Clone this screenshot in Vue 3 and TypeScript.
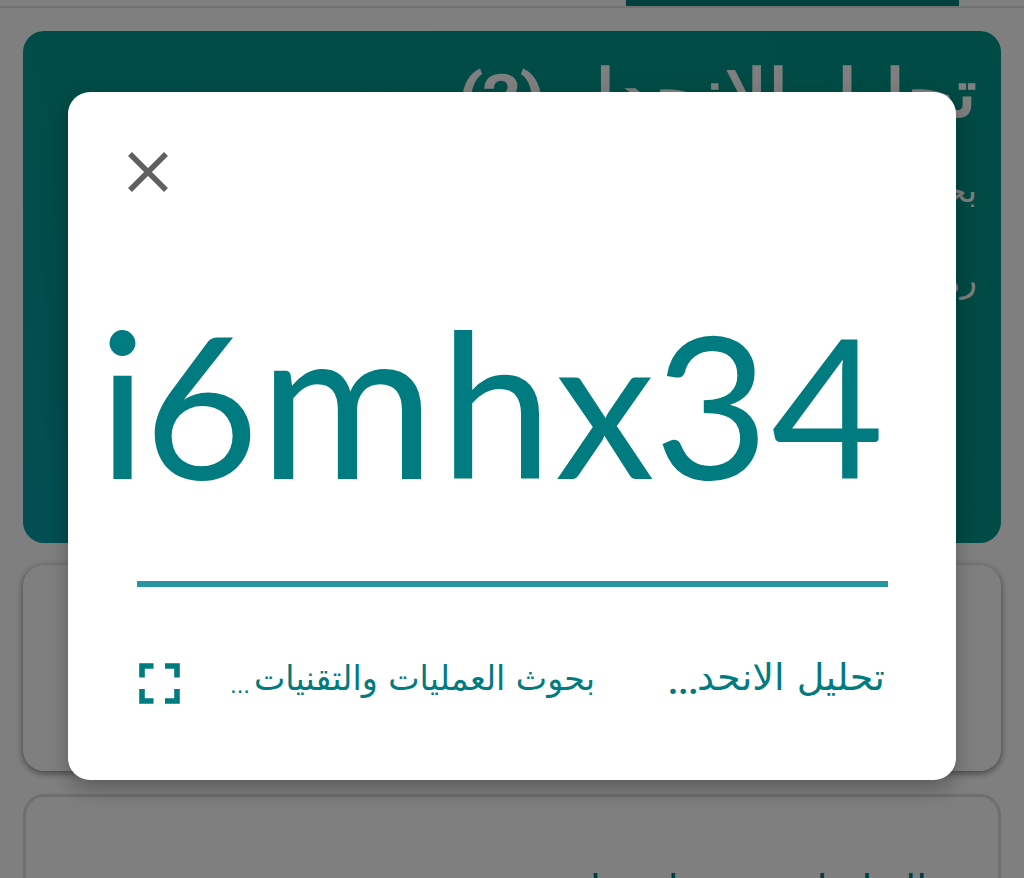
<script setup lang="ts">
import { ref } from 'vue'

const isOpen = ref(true)

const course = {
  title: 'تحليل الانحدار',
  group: '(2)',
  section: 'بحوث العمليات والتقنيات',
  codeLabel: 'رمز الصف',
}

const codeGlyphs = [
  { char: 'i', x: -10, size: 204 },
  { char: '6', x: 36, size: 198 },
  { char: 'm', x: 151, size: 214 },
  { char: 'h', x: 332, size: 201 },
  { char: 'x', x: 447, size: 200 },
  { char: '3', x: 546, size: 198 },
  { char: '4', x: 663, size: 195 },
]

const close = () => {
  isOpen.value = false
}
</script>
<template>
  <div class="page" dir="rtl">
    <nav class="tabs"><span class="tab-indicator"></span></nav>
    <main class="stream">
      <section class="banner">
        <h1 class="banner-title">{{ course.title }} <span class="group">{{ course.group }}</span></h1>
        <p class="banner-section">{{ course.section }}</p>
        <p class="banner-code">{{ course.codeLabel }}</p>
      </section>
      <section class="share-card"></section>
      <section class="info-card">
        <h2 class="info-title">التواصل مع صفك هنا</h2>
      </section>
    </main>

    <div v-if="isOpen" class="overlay" dir="ltr">
      <div class="dialog">
        <button class="close" aria-label="إغلاق" @click="close">
          <svg width="40" height="40" viewBox="0 0 40 40">
            <path d="M2 2L38 38M38 2L2 38" stroke="#5f6062" stroke-width="5.4" />
          </svg>
        </button>
        <svg class="code" width="800" height="180" viewBox="0 0 800 180">
          <text y="157"><tspan v-for="g in codeGlyphs" :key="g.char" :x="g.x" :font-size="g.size">{{ g.char }}</tspan></text>
        </svg>
        <div class="divider"></div>
        <footer class="dialog-footer">
          <svg class="fullscreen" width="41" height="41" viewBox="0 0 41 41">
            <path
              d="M3 14.5V3H14.5M26 3H38V14.5M38 26V38H26M14.5 38H3V26"
              fill="none"
              stroke="#007b80"
              stroke-width="5.6"
            />
          </svg>
          <svg class="names" width="655" height="60" viewBox="0 0 655 60" direction="rtl">
            <text x="365" y="35" class="section-name" textLength="341" lengthAdjust="spacingAndGlyphs">بحوث العمليات والتقنيات</text>
            <text x="0" y="38" class="section-dots">...</text>
            <text x="655" y="35" class="course-name" textLength="188" lengthAdjust="spacingAndGlyphs">تحليل الانحد</text>
            <text x="438" y="39" class="course-dots">...</text>
          </svg>
        </footer>
      </div>
    </div>
  </div>
</template>
<style>
body {
  overflow: hidden;
}
</style>
<style scoped>
.page {
  position: relative;
  height: 878px;
  overflow: hidden;
  background: #ffffff;
  font-family: 'DejaVu Sans', sans-serif;
}

.tabs {
  height: 8px;
  box-sizing: border-box;
  border-bottom: 2px solid #e2e2e2;
  padding-right: 65px;
}

.tab-indicator {
  display: block;
  width: 333px;
  height: 6px;
  background: #00827e;
}

.stream {
  padding: 23px 23px 0;
}

.banner {
  height: 512px;
  box-sizing: border-box;
  padding: 27px 24px;
  border-radius: 21px;
  background: linear-gradient(75deg, #069ea8 0%, #04988f 14%, #00978a 100%);
  color: #ffffff;
}

.banner-title {
  margin: 0;
  font-size: 67px;
  line-height: 72px;
  font-weight: 400;
  word-spacing: -9px;
  white-space: nowrap;
  transform: scaleX(1.125);
  transform-origin: right;
  -webkit-text-stroke: 1.6px #ffffff;
}

.group {
  font-family: Roboto, sans-serif;
  font-size: 60px;
  font-weight: 500;
}

.banner-section,
.banner-code {
  margin: 0;
  font-size: 34px;
  line-height: 44px;
}

.banner-section {
  margin-top: 35px;
}

.banner-code {
  margin-top: 46px;
}

.share-card {
  height: 206px;
  margin-top: 22px;
  border-radius: 21px;
  background: #ffffff;
  box-shadow: 0 2px 7px rgba(0, 0, 0, 0.5);
}

.info-card {
  height: 200px;
  margin-top: 23px;
  box-sizing: border-box;
  padding: 69px 71px 0;
  border: 3px solid #dedede;
  border-radius: 21px;
}

.info-title {
  margin: 0;
  color: #007b80;
  font-size: 39px;
  line-height: 48px;
  font-weight: 400;
}

.overlay {
  position: absolute;
  inset: 0;
  display: flex;
  justify-content: center;
  align-items: flex-start;
  background: rgba(0, 0, 0, 0.5);
}

.dialog {
  width: 888px;
  height: 688px;
  margin-top: 92px;
  box-sizing: border-box;
  padding: 60px 40px 0;
  border-radius: 22px;
  background: #ffffff;
  box-shadow: 0 9px 22px rgba(0, 0, 0, 0.27);
}

.close {
  display: block;
  width: 40px;
  height: 40px;
  margin-left: 20px;
  padding: 0;
  border: 0;
  background: none;
}

.close svg {
  display: block;
}

.code {
  display: block;
  margin-top: 130px;
  overflow: visible;
  fill: #007b80;
  font-family: Lato, sans-serif;
}

.divider {
  height: 6px;
  margin: 79px 28.5px 0;
  background: #2995a0;
}

.dialog-footer {
  display: flex;
  gap: 50px;
  margin: 68px 0 0 31px;
}

.fullscreen {
  flex: none;
  margin-top: 8px;
}

.names {
  flex: none;
  overflow: visible;
  font-family: 'DejaVu Sans', sans-serif;
  font-size: 34px;
  fill: #007b80;
}

.course-name {
  font-size: 37px;
}

.section-dots {
  direction: ltr;
  font-family: 'Liberation Sans', sans-serif;
  font-size: 24px;
}

.course-dots {
  direction: ltr;
  font-family: Roboto, sans-serif;
  font-weight: 700;
  font-size: 35px;
}
</style>
